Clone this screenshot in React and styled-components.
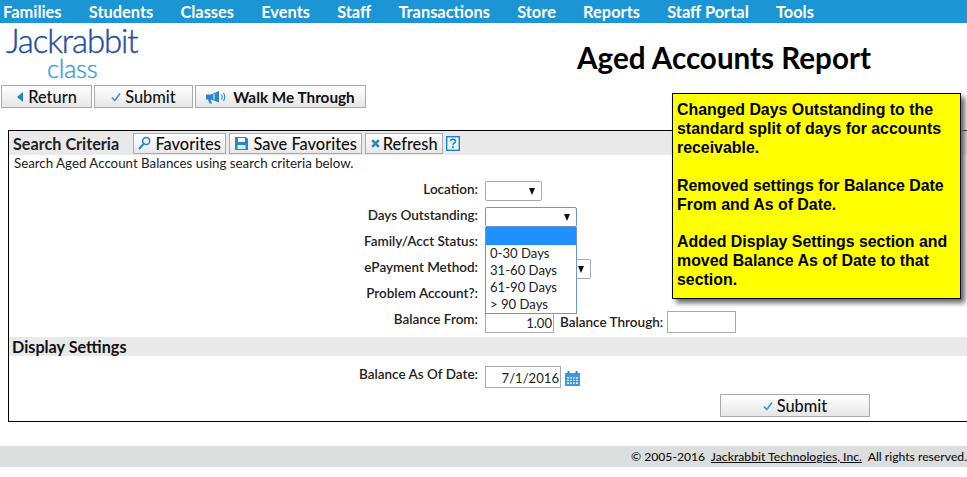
import React from "react";
import styled, { createGlobalStyle } from "styled-components";

const Global = createGlobalStyle`
  html, body { margin: 0; padding: 0; background: #fff; overflow: hidden; }
  body { font-family: Lato, "Liberation Sans", sans-serif; color: #111; width: 967px; height: 477px; }
`;
const Page = styled.div`position: relative; width: 967px; height: 477px; overflow: hidden;`;
const Nav = styled.nav`
  height: 23px; background: #1b95d4; display: flex; align-items: center;
  padding-left: 3px; gap: 27.2px; color: #fff; font-weight: 700; font-size: 16.4px; line-height: 23px;
`;
const Head = styled.header`display: flex; height: 62px;`;
const Logo = styled.div`width: 200px; padding: 1px 0 0 6px; box-sizing: border-box; display: flex; flex-direction: column;`;
const LogoTop = styled.span`font-size: 33px; line-height: 32px; color: #1c509e; font-weight: 300; letter-spacing: -1.1px; -webkit-text-stroke: 0.4px #1c509e;`;
const LogoBottom = styled.span`font-size: 25.5px; line-height: 24px; color: #35a0da; font-weight: 300; margin-left: 41px; letter-spacing: -0.3px; -webkit-text-stroke: 0.4px #35a0da;`;
const Title = styled.h1`
  margin: 0; flex: 1; text-align: center; font-size: 29.6px; line-height: 36px; font-weight: 700; color: #000;
  padding: 17px 0 0 281px; box-sizing: border-box; white-space: nowrap;
`;
const Actions = styled.div`display: flex; gap: 2px; padding-left: 1px; height: 23px;`;
const Btn = styled.button`
  box-sizing: border-box; height: ${p => p.$h || 23}px; width: ${p => p.$w}px; padding: 0;
  display: flex; align-items: center; justify-content: center; gap: ${p => p.$gap ?? 4}px;
  border: 1px solid #aaa; background: linear-gradient(#fff, #e6e6e6);
  font-family: Lato, sans-serif; font-size: ${p => p.$bold ? 15.3 : 16.4}px; font-weight: ${p => p.$bold ? 700 : 500}; color: #111; white-space: nowrap;
`;
const Panel = styled.section`
  box-sizing: border-box; margin: 22px 0 0 8px; width: 970px; height: 292px; border: 1px solid #000; border-right: 0;
`;
const Bar = styled.div`
  height: 24px; background: #e9e9e9; display: flex; align-items: center; padding-left: ${p => p.$pl ?? 4}px; gap: 3px;
  font-size: 16.2px; font-weight: 700;
`;
const BarTitle = styled.span`margin-right: 11px; color: #222;`;
const Hint = styled.div`font-size: 13.3px; line-height: 17px; padding-left: 5px; color: #222;`;
const Form = styled.div`
  display: grid; grid-template-columns: 469px auto; column-gap: 7px; grid-auto-rows: 26px; margin-top: 9px;
`;
const Label = styled.label`
  font-size: 13.5px; font-weight: 600; text-align: right; line-height: 17px; color: #222;
`;
const Control = styled.div`display: flex; align-items: flex-start;`;
const Select = styled.div`
  box-sizing: border-box; width: ${p => p.$w}px; height: 20px; background: #fff; position: relative;
  border: 1px solid ${p => p.$focus ? "#6f93cf" : "#aaa"}; border-radius: 2px;
  &::after {
    content: ""; position: absolute; right: 6px; top: 6px;
    border-left: 3.5px solid transparent; border-right: 3.5px solid transparent; border-top: 7px solid #111;
  }
`;
const Input = styled.div`
  box-sizing: border-box; width: ${p => p.$w}px; height: 22px; border: 1px solid #aaa; text-align: right;
  font-size: 13.1px; line-height: 22px; padding-right: 1px; color: #222; background: #fff;
`;
const Through = styled.span`font-size: 13.5px; font-weight: 600; line-height: 22px; margin: 0 4px 0 6px; color: #222; white-space: nowrap;`;
const Section = styled(Bar)`height: 19px; margin-top: 0;`;
const DateRow = styled.div`
  display: grid; grid-template-columns: 469px auto; column-gap: 7px; margin-top: 10px; height: 22px;
`;
const CalWrap = styled.span`margin: 5px 0 0 4px; display: flex;`;
const SubmitRow = styled.div`display: flex; padding: 6px 0 0 711px;`;
const Footer = styled.footer`
  margin-top: 24px; height: 21px; background: #dcdddd; text-align: right; font-size: 12.15px; line-height: 21px;
  font-weight: 500; color: #111; white-space: pre;
`;
const FootLink = styled.a`color: #111; text-decoration: underline;`;
const Note = styled.aside`
  position: absolute; left: 672px; top: 93px; width: 289px; height: 206px; box-sizing: border-box;
  background: #ff0; border: 1px solid #000; padding: 6px 4px; box-shadow: 4px 4px 5px #666;
  font-family: "Liberation Sans", Arial, sans-serif; font-weight: 700; font-size: 15.9px; line-height: 19px; color: #000;
`;
const NoteP = styled.p`margin: 0 0 19px; &:nth-child(2) { margin-bottom: 18px; }`;
const Menu = styled.div`
  position: absolute; left: 485px; top: 227px; width: 92px; height: 87px; box-sizing: border-box;
  border: 1px solid #6f93cf; border-top: 0; background: #fff; font-size: 13.1px; line-height: 17px; color: #222;
`;
const Blank = styled.div`height: 18px; background: #1e90ff;`;
const Option = styled.div`padding-left: 4px;`;

const Chk = () => <svg width="10" height="10" viewBox="0 0 10 10"><path d="M1 5.500 L3.800 8.500 L9 1.500" fill="none" stroke="#3a9ad9" strokeWidth="1.700"/></svg>;
const Tri = () => <svg width="8" height="10" viewBox="0 0 8 10"><path d="M7 0 V10 L1 5Z" fill="#1b85c9"/></svg>;
const Horn = () => <svg width="20" height="14" viewBox="0 0 20 14"><path d="M0 4.500h5L13 1v11.500L5 9.500H4.500L6 13.500H3.500L2 9.500H0Z" fill="#2a86c8"/><path d="M8 4v5.500" stroke="#fff" strokeWidth="1"/><path d="M15.500 4.500q1.500 2.500 0 5M17.500 3q2.500 4 0 8" fill="none" stroke="#2a86c8" strokeWidth="1.100"/></svg>;
const Mag = () => <svg width="13" height="14" viewBox="0 0 13 14"><circle cx="8.200" cy="5" r="3.500" fill="none" stroke="#2a86c8" strokeWidth="1.600"/><path d="M5.500 8 L1 13" stroke="#2a86c8" strokeWidth="2"/></svg>;
const Disk = () => <svg width="13" height="13" viewBox="0 0 13 13"><path d="M0 0H11L13 2V13H0Z" fill="#2a86c8"/><rect x="3" y="1" width="7" height="4" fill="#fff"/><rect x="2.500" y="8" width="8" height="4" fill="#d8ecf8"/></svg>;
const Cross = () => <svg width="9" height="9" viewBox="0 0 9 9"><path d="M1.200 1.200 L7.800 7.800 M7.800 1.200 L1.200 7.800" stroke="#2a86c8" strokeWidth="2.500"/></svg>;
const Help = () => <svg width="14" height="15" viewBox="0 0 14 15"><rect x=".7" y=".7" width="12.600" height="13.600" fill="#eaf5fb" stroke="#1b85c9" strokeWidth="1.400"/><path d="M4.500 5.200q0-2 2.500-2t2.500 2q0 1.300-1.500 2-1 .5-1 2" fill="none" stroke="#1b85c9" strokeWidth="1.500"/><rect x="6" y="10.300" width="1.800" height="1.800" fill="#1b85c9"/></svg>;
const Cal = () => <svg width="15" height="15" viewBox="0 0 15 15"><path d="M0 2H15V15H0Z" fill="#3b9bdc"/><rect x="2.500" y="0" width="2" height="3" fill="#2a86c8"/><rect x="10.500" y="0" width="2" height="3" fill="#2a86c8"/><path d="M2 6H13V13H2Z" fill="#cfe7f7"/><path d="M2 8.200H13M2 10.600H13M4.700 6V13M7.500 6V13M10.300 6V13" stroke="#2a86c8" strokeWidth=".9"/></svg>;

const NAV = ["Families", "Students", "Classes", "Events", "Staff", "Transactions", "Store", "Reports", "Staff Portal", "Tools"];
const ROWS = [
  ["Location:", 57],
  ["Days Outstanding:", 92, true],
  ["Family/Acct Status:", 92],
  ["ePayment Method:", 106],
  ["Problem Account?:", 92],
];

export default function App() {
  return (
    <Page>
      <Global />
      <Nav>{NAV.map(n => <span key={n}>{n}</span>)}</Nav>
      <Head>
        <Logo><LogoTop>Jackrabbit</LogoTop><LogoBottom>class</LogoBottom></Logo>
        <Title>Aged Accounts Report</Title>
      </Head>
      <Actions>
        <Btn $w={91}><Tri /> Return</Btn>
        <Btn $w={99}><Chk /> Submit</Btn>
        <Btn $w={171} $bold $gap={7}><Horn /> Walk Me Through</Btn>
      </Actions>
      <Panel>
        <Bar>
          <BarTitle>Search Criteria</BarTitle>
          <Btn $w={93} $h={21}><Mag /> Favorites</Btn>
          <Btn $w={133} $h={21} $gap={6}><Disk /> Save Favorites</Btn>
          <Btn $w={78} $h={21} $gap={3}><Cross /> Refresh</Btn>
          <Help />
        </Bar>
        <Hint>Search Aged Account Balances using search criteria below.</Hint>
        <Form>
          {ROWS.map(([l, w, f]) => (
            <React.Fragment key={l}>
              <Label>{l}</Label>
              <Control><Select $w={w} $focus={f} /></Control>
            </React.Fragment>
          ))}
          <Label>Balance From:</Label>
          <Control>
            <Input $w={69}>1.00</Input>
            <Through>Balance Through:</Through>
            <Input $w={69} />
          </Control>
        </Form>
        <Section $pl={3}>Display Settings</Section>
        <DateRow>
          <Label>Balance As Of Date:</Label>
          <Control>
            <Input $w={76}>7/1/2016</Input>
            <CalWrap><Cal /></CalWrap>
          </Control>
        </DateRow>
        <SubmitRow><Btn $w={150}><Chk /> Submit</Btn></SubmitRow>
      </Panel>
      <Footer>© 2005-2016  <FootLink>Jackrabbit Technologies, Inc.</FootLink>  All rights reserved.</Footer>
      <Menu>
        <Blank />
        <Option>0-30 Days</Option>
        <Option>31-60 Days</Option>
        <Option>61-90 Days</Option>
        <Option>&gt; 90 Days</Option>
      </Menu>
      <Note>
        <NoteP>Changed Days Outstanding to the standard split of days for accounts receivable.</NoteP>
        <NoteP>Removed settings for Balance Date From and As of Date.</NoteP>
        <NoteP>Added Display Settings section and moved Balance As of Date to that section.</NoteP>
      </Note>
    </Page>
  );
}
